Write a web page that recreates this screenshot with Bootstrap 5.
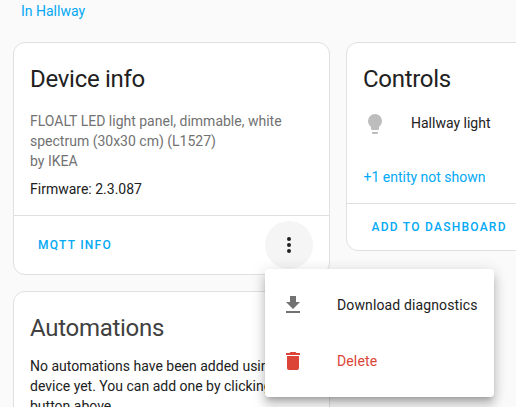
<!DOCTYPE html>
<html lang="en">
<head>
<meta charset="utf-8">
<meta name="viewport" content="width=device-width, initial-scale=1">
<title>Device</title>
<link href="https://cdn.jsdelivr.net/npm/bootstrap@5.3.0/dist/css/bootstrap.min.css" rel="stylesheet">
<style>
html,body{height:100%;overflow:hidden}
body{font:400 14px/20px Roboto,sans-serif;color:#212121;background:#fafafa}
.page{height:407px;overflow:hidden;padding-left:13px}
.area-link,.more-link{color:#03a9f4;text-decoration:none}
.area-link{padding:1px 8px 21px}
.columns{gap:16px}
.column{width:317px;gap:16px}
.panel{--bs-card-border-color:#e0e0e0;--bs-card-border-radius:12px;--bs-card-inner-border-radius:11px;--bs-card-bg:#fff;color:#212121}
.panel-body{padding:12px 16px 16px}
.panel-title{font-size:24px;line-height:48px;font-weight:400;letter-spacing:-.012em;margin:0}
.panel-title.soft{color:#414141}
.muted{color:#727272}
.panel-actions{border-top:1px solid #e0e0e0;padding:5px 16px}
.short{padding:5px 16px 5px 16.5px}
.action{--bs-btn-color:#03a9f4;--bs-btn-hover-color:#03a9f4;--bs-btn-font-size:12px;--bs-btn-font-weight:500;--bs-btn-padding-x:8px;--bs-btn-padding-y:0;--bs-btn-border-width:0;line-height:36px;letter-spacing:1.25px}
.round{--bs-btn-border-radius:50%;--bs-btn-bg:#f5f5f5;--bs-btn-border-width:0;width:48px;height:48px}
.entity{height:40px;gap:24px}
.entity svg{margin-top:2px}
.more-link{margin-left:.5px}
.overflow-menu{left:251px;top:226px;width:229px;padding:8px 0;border:0;border-radius:4px;background:#fff;box-shadow:0 5px 5px -3px rgba(0,0,0,.2),0 8px 10px 1px rgba(0,0,0,.14),0 3px 14px 2px rgba(0,0,0,.12);z-index:5}
.menu-row{height:56px;padding:0 16px;gap:32px;font-size:14px;letter-spacing:.13px;color:#212121}
.menu-row.delete{color:#db4437}
svg{display:block;flex:none}
</style>
</head>
<body>
<main class="page">
  <div class="area-link"><a class="area-link p-0" href="#">In Hallway</a></div>
  <div class="columns d-flex align-items-start">
    <div class="column d-flex flex-column flex-shrink-0">
      <section class="card panel">
        <div class="panel-body">
          <h1 class="panel-title mb-2">Device info</h1>
          <div class="muted">FLOALT LED light panel, dimmable, white<br>spectrum (30x30 cm) (L1527)</div>
          <div class="muted mb-2">by IKEA</div>
          <div>Firmware: 2.3.087</div>
        </div>
        <div class="panel-actions d-flex justify-content-between align-items-center">
          <button class="btn action">MQTT INFO</button>
          <button class="btn round p-0 d-flex align-items-center justify-content-center" aria-label="Menu">
            <svg width="24" height="24" viewBox="0 0 24 24" fill="#212121"><path d="M12 16a2 2 0 1 1 0 4 2 2 0 0 1 0-4m0-6a2 2 0 1 1 0 4 2 2 0 0 1 0-4m0-6a2 2 0 1 1 0 4 2 2 0 0 1 0-4"/></svg>
          </button>
        </div>
        <div class="overflow-menu position-absolute">
          <div class="menu-row d-flex align-items-center">
            <svg width="24" height="24" viewBox="0 0 24 24" fill="#727272"><path d="M5 20h14v-2H5m14-9h-4V3H9v6H5l7 7 7-7Z"/></svg>
            <span class="text-nowrap">Download diagnostics</span>
          </div>
          <div class="menu-row delete d-flex align-items-center">
            <svg width="24" height="24" viewBox="0 0 24 24" fill="#db4437"><path d="M19 4h-3.5l-1-1h-5l-1 1H5v2h14M6 19a2 2 0 0 0 2 2h8a2 2 0 0 0 2-2V7H6v12Z"/></svg>
            <span>Delete</span>
          </div>
        </div>
      </section>
      <section class="card panel z-0">
        <div class="panel-body">
          <h1 class="panel-title soft mb-1">Automations</h1>
          <div class="text-nowrap">No automations have been added using this<br>device yet. You can add one by clicking the +<br>button above.</div>
        </div>
      </section>
    </div>
    <div class="column d-flex flex-column flex-shrink-0">
      <section class="card panel">
        <div class="panel-body">
          <h1 class="panel-title">Controls</h1>
          <div class="entity d-flex align-items-center">
            <svg width="24" height="24" viewBox="0 0 24 24" fill="#bdbdbd"><path d="M12 2a7 7 0 0 0-7 7c0 2.38 1.19 4.47 3 5.74V17a1 1 0 0 0 1 1h6a1 1 0 0 0 1-1v-2.26c1.81-1.27 3-3.36 3-5.74a7 7 0 0 0-7-7M9 21a1 1 0 0 0 1 1h4a1 1 0 0 0 1-1v-1H9v1Z"/></svg>
            <span>Hallway light</span>
          </div>
          <div class="pt-4"><a class="more-link" href="#">+1 entity not shown</a></div>
        </div>
        <div class="panel-actions short d-flex">
          <button class="btn action">ADD TO DASHBOARD</button>
        </div>
      </section>
    </div>
  </div>
</main>
<script src="https://cdn.jsdelivr.net/npm/bootstrap@5.3.0/dist/js/bootstrap.bundle.min.js"></script>
</body>
</html>
